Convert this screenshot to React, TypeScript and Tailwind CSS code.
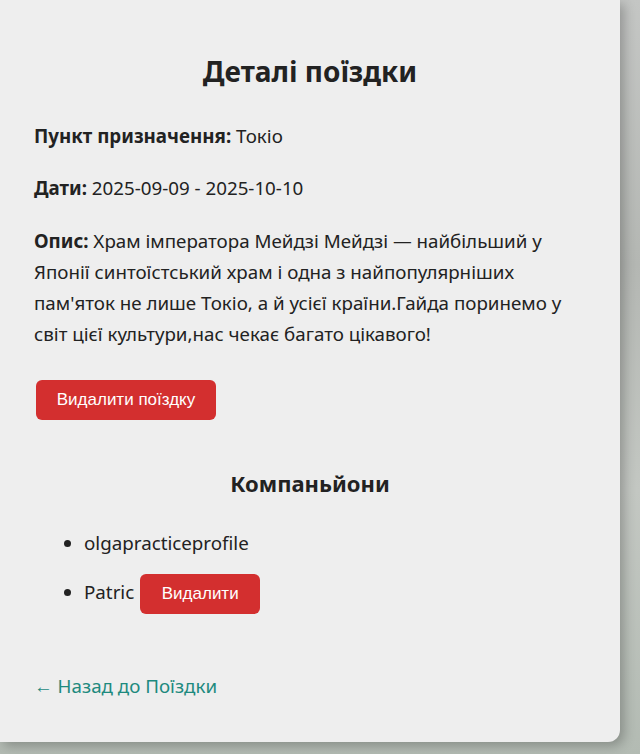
import React from 'react'

const companions = [
    { name: 'olgapracticeprofile', removable: false },
    { name: 'Patric', removable: true },
]

export default function App() {
    return (
        <div className="h-[754px] w-[640px] overflow-hidden bg-[linear-gradient(180deg,#c4c6c4_0%,#b4b7b3_35%,#c3c7c2_65%,#b3bbb3_100%)]">
            <div
                className="w-[620px] h-[742px] rounded-br-xl bg-[#eeeeee] shadow-[4px_4px_12px_rgba(0,0,0,0.25)] px-[34px] pt-[50px] text-[#222222]"
                style={{ fontFamily: '"Noto Sans", "Open Sans", sans-serif' }}
            >
                {/* Trip header */}
                <h1 className="text-center text-[28px] font-bold leading-[42px] mb-[28px]">Деталі поїздки</h1>

                <p className="text-[18.75px] leading-[31px] mb-[21px]">
                    <b>Пункт призначення:</b> Токіо
                </p>
                <p className="text-[18.75px] leading-[31px] mb-[22px]">
                    <b>Дати:</b> 2025-09-09 - 2025-10-10
                </p>
                <p className="text-[18.75px] leading-[31px] mb-[31px]">
                    <b>Опис:</b> Храм імператора Мейдзі Мейдзі — найбільший у Японії синтоїстський храм і одна з
                    найпопулярніших пам'яток не лише Токіо, а й усієї країни.Гайда поринемо у світ цієї
                    культури,нас чекає багато цікавого!
                </p>

                <button
                    className="ml-[2px] h-[40px] w-[180px] rounded-md bg-[#d32f2f] text-white text-[17px]"
                    style={{ fontFamily: '"Liberation Sans", Arial, sans-serif' }}
                >
                    Видалити поїздку
                </button>

                {/* Companions */}
                <h2 className="mt-[48px] text-center text-[22px] font-bold leading-[30px]">Компаньйони</h2>
                <ul className="mt-[31px] list-disc pl-[50px] text-[18.75px] flex flex-col gap-[17px]">
                    {companions.map((c) => (
                        <li key={c.name} className="leading-[28px]">
                            <span>{c.name}</span>
                            {c.removable && (
                                <button
                                    className="ml-[6px] h-[40px] w-[120px] rounded-md bg-[#d32f2f] text-white text-[17px] align-middle"
                                    style={{ fontFamily: '"Liberation Sans", Arial, sans-serif' }}
                                >
                                    Видалити
                                </button>
                            )}
                        </li>
                    ))}
                </ul>

                <a href="#" className="block mt-[58px] text-[18.75px] text-[#1d8a7e]">
                    ← Назад до Поїздки
                </a>
            </div>
        </div>
    )
}
